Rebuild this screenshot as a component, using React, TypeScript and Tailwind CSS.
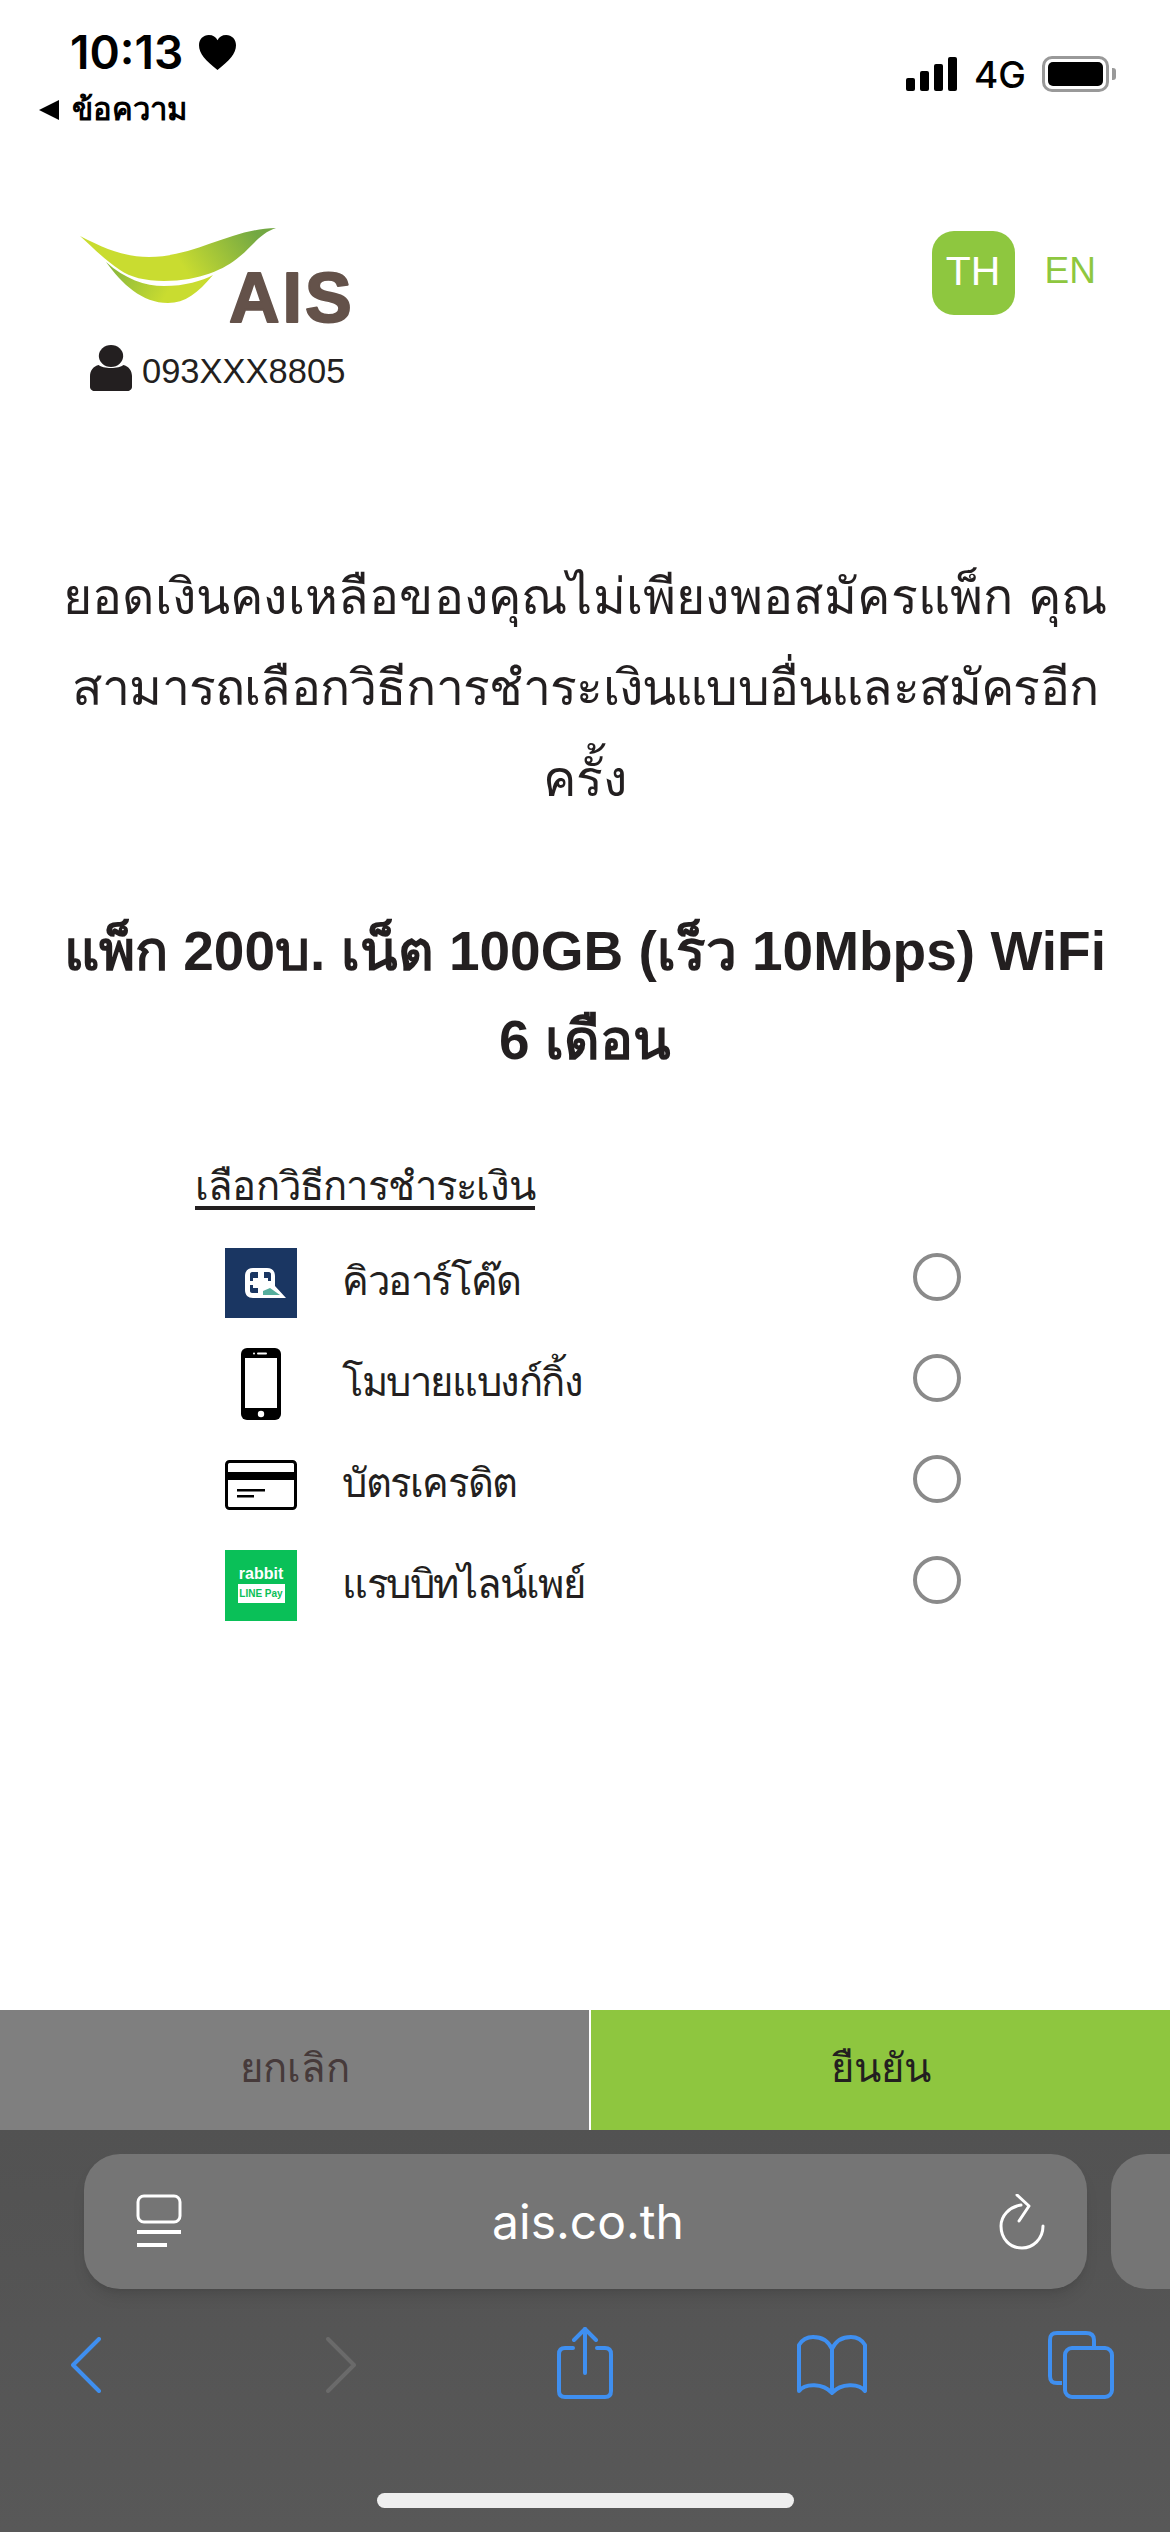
import React from 'react';

const methods = [
    { label: 'คิวอาร์โค๊ด', icon: <QrIcon /> },
    { label: 'โมบายแบงก์กิ้ง', icon: <PhoneIcon /> },
    { label: 'บัตรเครดิต', icon: <CardIcon /> },
    { label: 'แรบบิทไลน์เพย์', icon: <RabbitIcon /> },
];

function QrIcon() {
    return (
        <svg width="72" height="70" viewBox="0 0 72 70">
            <rect width="72" height="70" fill="#1a3662" />
            <path d="M28 20H42C47 20 50 23 50 28V38L61 50H28C23 50 20 47 20 42V28C20 23 23 20 28 20Z" fill="#fff" />
            <path d="M27 24H33V30H28V33H25V26C25 25 26 24 27 24Z" fill="#1a3662" />
            <path d="M39 24H44C45 24 46 25 46 26V33H43V30H39Z" fill="#1a3662" />
            <path d="M25 37H28V40H33V45H27C26 45 25 44 25 43Z" fill="#1a3662" />
            <path d="M38 47V43L45 40L55 47Z" fill="#55ae9d" />
        </svg>
    );
}

function PhoneIcon() {
    return (
        <svg width="40" height="72" viewBox="0 0 40 72">
            <rect width="40" height="72" rx="6" fill="#000" />
            <rect x="4" y="10" width="32" height="50" fill="#fff" />
            <circle cx="20" cy="66" r="3.200" fill="#fff" />
            <rect x="16" y="4.500" width="10" height="2" rx="1" fill="#fff" />
            <circle cx="13" cy="5.500" r="1" fill="#fff" />
        </svg>
    );
}

function CardIcon() {
    return (
        <svg width="72" height="50" viewBox="0 0 72 50">
            <rect x="1.500" y="1.500" width="69" height="47" rx="3" fill="#fff" stroke="#000" strokeWidth="3" />
            <rect x="2" y="12" width="68" height="8" fill="#000" />
            <rect x="12" y="29" width="28" height="2.500" fill="#000" />
            <rect x="12" y="35" width="17" height="2.500" fill="#000" />
        </svg>
    );
}

function RabbitIcon() {
    return (
        <div className="flex h-[71px] w-[72px] flex-col items-center bg-[#0ac058] pt-[15px]">
            <span className="text-[16px] leading-[17px] font-bold text-white">rabbit</span>
            <span className="mt-[2px] flex h-[19px] w-[47px] items-center justify-center bg-white text-[10px] font-bold whitespace-nowrap text-[#0ac058]">
                LINE Pay
            </span>
        </div>
    );
}

function Logo() {
    return (
        <svg width="290" height="98" viewBox="0 0 290 98" className="block overflow-visible">
            <defs>
                <linearGradient id="leafTop" x1="110" y1="50" x2="175" y2="5" gradientUnits="userSpaceOnUse">
                    <stop offset="0" stopColor="#c9dc30" />
                    <stop offset="1" stopColor="#73a843" />
                </linearGradient>
                <linearGradient id="leafBottom" x1="35" y1="40" x2="85" y2="70" gradientUnits="userSpaceOnUse">
                    <stop offset="0" stopColor="#8cb93c" />
                    <stop offset="1" stopColor="#c9dc30" />
                </linearGradient>
            </defs>
            <path d="M0 9C25 22 45 30 69 30C115 30 150 2 196 1C180 6 172 20 159 30C145 42 120 54 84 54C65 54 50 50 40 43C25 33 12 20 0 9Z" fill="url(#leafTop)" />
            <path d="M26 35C45 52 65 59 84 59C105 59 122 54 133 48C118 66 105 76 88 76C62 76 42 57 26 35Z" fill="url(#leafBottom)" />
            <text x="149" y="95" fontFamily="'Liberation Sans', sans-serif" fontSize="70" fontWeight="700" fill="#64524a" stroke="#64524a" strokeWidth="2" strokeLinejoin="round" letterSpacing="3">AIS</text>
        </svg>
    );
}

export default function App() {
    return (
        <div className="flex h-[2532px] w-[1170px] flex-col overflow-hidden bg-white font-['Liberation_Sans','Noto_Sans',sans-serif] text-[#231f20]">
            {/* status bar */}
            <div className="flex h-[140px] shrink-0 justify-between pt-[26px]">
                <div className="pl-[39px]">
                    <div className="flex items-center pl-[31px] font-['Inter',sans-serif] text-[46px] leading-[52px] font-semibold text-black">
                        10:13
                        <svg width="37" height="35" viewBox="0 0 34 34" className="ml-[16px]" preserveAspectRatio="none">
                            <path d="M17 34C6 25 0 18 0 10C0 4 4 0 9 0C13 0 15.500 2 17 5C18.500 2 21 0 25 0C30 0 34 4 34 10C34 18 28 25 17 34Z" fill="#000" />
                        </svg>
                    </div>
                    <div className="mt-[12px] flex items-center text-[31px] leading-[40px] font-bold text-black">
                        <span className="mr-[13px] h-0 w-0 border-y-[10px] border-r-[20px] border-y-transparent border-r-black" />
                        ข้อความ
                    </div>
                </div>
                <div className="flex items-start pt-[31px] pr-[54px]">
                    <div className="flex h-[34px] items-end gap-[5px]">
                        <span className="h-[13px] w-[9px] rounded-[2px] bg-black" />
                        <span className="h-[20px] w-[9px] rounded-[2px] bg-black" />
                        <span className="h-[27px] w-[9px] rounded-[2px] bg-black" />
                        <span className="h-[34px] w-[9px] rounded-[2px] bg-black" />
                    </div>
                    <span className="ml-[17px] font-['Inter',sans-serif] text-[37px] leading-[36px] font-medium text-black">4G</span>
                    <div className="-mt-[1px] ml-[16px] flex items-center">
                        <div className="h-[36px] w-[67px] rounded-[10px] border-[3px] border-[#999] p-[3px]">
                            <div className="h-full w-full rounded-[5px] bg-black" />
                        </div>
                        <span className="ml-[3px] h-[12px] w-[4px] rounded-r-[3px] bg-[#999]" />
                    </div>
                </div>
            </div>

            {/* header */}
            <div className="flex h-[280px] shrink-0 items-start justify-between pt-[87px] pr-[74px] pl-[80px]">
                <div>
                    <Logo />
                    <div className="mt-[17px] ml-[10px] flex items-center">
                        <svg width="42" height="46" viewBox="0 0 38 46" preserveAspectRatio="none">
                            <circle cx="19" cy="11" r="11" fill="#231f20" />
                            <path d="M8 20C11 24 27 24 30 20C35 21 38 26 38 31V42C38 44 36 46 34 46H4C2 46 0 44 0 42V31C0 26 3 21 8 20Z" fill="#231f20" />
                        </svg>
                        <span className="mt-[6px] ml-[10px] text-[34.500px] leading-[46px]">093XXX8805</span>
                    </div>
                </div>
                <div className="flex items-start pt-[4px]">
                    <span className="flex h-[84px] w-[83px] justify-center rounded-[22px] bg-[#8ec73f] pt-[16px] text-[41px] leading-[48px] text-white">TH</span>
                    <span className="ml-[30px] pt-[16px] text-[37px] leading-[48px] text-[#8ec73f]">EN</span>
                </div>
            </div>

            {/* message */}
            <div className="shrink-0 pt-[132px] text-center text-[50px] leading-[91px] whitespace-nowrap">
                <span className="tracking-[0.2px]">ยอดเงินคงเหลือของคุณไม่เพียงพอสมัครแพ็ก คุณ</span>
                <br />
                <span className="tracking-[-0.8px]">สามารถเลือกวิธีการชำระเงินแบบอื่นและสมัครอีก</span>
                <br />
                ครั้ง
            </div>
            <div className="mt-[82px] shrink-0 text-center text-[55px] leading-[89px] font-bold whitespace-nowrap">
                แพ็ก 200บ. เน็ต 100GB (เร็ว 10Mbps) WiFi
                <br />
                6 เดือน
            </div>

            {/* payment methods */}
            <div className="mt-[71px] shrink-0 pl-[195px]">
                <div className="text-[40px] leading-[60px] tracking-[-0.8px] underline underline-offset-[6px]">เลือกวิธีการชำระเงิน</div>
                <div className="mt-[16px] flex flex-col">
                    {methods.map((method) => (
                        <div key={method.label} className="flex h-[101px] items-center pl-[30px]">
                            <div className="flex w-[72px] justify-center">{method.icon}</div>
                            <span className="ml-[45px] w-[571px] pb-[4px] text-[40px] leading-[60px] tracking-[-1.400px]">{method.label}</span>
                            <span className="mb-[12px] h-[48px] w-[48px] rounded-full border-[4px] border-[#8a8a8a] bg-white" />
                        </div>
                    ))}
                </div>
            </div>

            {/* actions */}
            <div className="mt-auto flex h-[120px] shrink-0 text-[40px]">
                <div className="flex w-[589px] items-center justify-center bg-[#7f7f7f] pb-[4px] text-[#463a3a]">ยกเลิก</div>
                <div className="flex flex-1 items-center justify-center border-l-[2px] border-white bg-[#8ec63f] pb-[4px]">ยืนยัน</div>
            </div>

            {/* safari toolbar */}
            <div className="flex h-[402px] shrink-0 flex-col bg-gradient-to-b from-[#525252] to-[#585858]">
                <div className="mt-[24px] flex h-[135px] gap-[24px]">
                    <div className="ml-[84px] flex w-[1003px] shrink-0 items-center justify-between rounded-[36px] bg-[#757575] pr-[42px] pl-[52px] shadow-lg">
                        <svg width="46" height="56" viewBox="0 0 46 56" fill="none" stroke="#fff">
                            <rect x="2" y="2" width="42" height="26" rx="6" strokeWidth="3" />
                            <path d="M1 38h44" strokeWidth="4" />
                            <path d="M1 51h30" strokeWidth="4" />
                        </svg>
                        <span className="mr-[5px] font-['Inter',sans-serif] text-[48px] text-white">ais.co.th</span>
                        <svg width="46" height="56" viewBox="0 0 46 56" fill="none" stroke="#fff" strokeWidth="3" strokeLinecap="round" strokeLinejoin="round">
                            <path d="M22 11C10 13 2 22 2 32C2 45 11 54 23 54C34 54 44 45 44 32" />
                            <path d="M18 1l12 11l-10 15" />
                        </svg>
                    </div>
                    <div className="w-[60px] rounded-l-[36px] bg-[#757575]" />
                </div>
                <div className="mt-[38px] flex items-start">
                    <svg width="30" height="56" viewBox="0 0 30 56" fill="none" stroke="#3f8ff0" strokeWidth="4" strokeLinecap="round" strokeLinejoin="round" className="mt-[10px] ml-[71px]">
                        <path d="M28 2L2 28L28 54" />
                    </svg>
                    <svg width="30" height="56" viewBox="0 0 30 56" fill="none" stroke="#6a6a6a" strokeWidth="4" strokeLinecap="round" strokeLinejoin="round" className="mt-[10px] ml-[225px]">
                        <path d="M2 2L28 28L2 54" />
                    </svg>
                    <svg width="56" height="72" viewBox="0 0 56 72" fill="none" stroke="#3f8ff0" strokeWidth="4" strokeLinecap="round" strokeLinejoin="round" className="ml-[201px]">
                        <path d="M16 21H8C4 21 2 23 2 27V64C2 68 4 70 8 70H48C52 70 54 68 54 64V27C54 23 52 21 48 21H40" />
                        <path d="M28 2V46" />
                        <path d="M17 13L28 2L39 13" />
                    </svg>
                    <svg width="70" height="60" viewBox="0 0 70 60" fill="none" stroke="#3f8ff0" strokeWidth="4" strokeLinejoin="round" className="mt-[8px] ml-[184px]">
                        <path d="M35 14C31 5 24 2 16 2C10 2 5 5 2 10V56C8 48 26 48 35 58C44 48 62 48 68 56V10C65 5 60 2 54 2C46 2 39 5 35 14Z" />
                        <path d="M35 14V58" />
                    </svg>
                    <svg width="66" height="68" viewBox="0 0 66 68" fill="none" stroke="#3f8ff0" strokeWidth="4" className="mt-[4px] ml-[181px]">
                        <path d="M14 52H9C4 52 2 50 2 45V9C2 4 4 2 9 2H38C43 2 46 4 46 9V17" />
                        <rect x="17" y="17" width="47" height="49" rx="7" />
                    </svg>
                </div>
                <div className="mt-auto mb-[24px] ml-[377px] h-[15px] w-[417px] rounded-full bg-[#eeeeee]" />
            </div>
        </div>
    );
}
